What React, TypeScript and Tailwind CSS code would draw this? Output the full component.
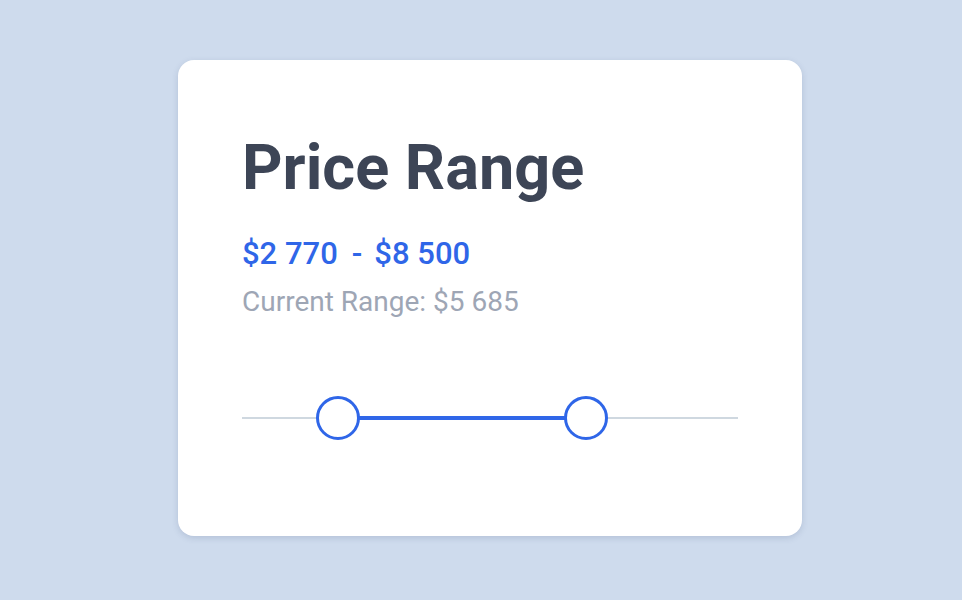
export default function App() {
  const min = 0;
  const max = 100;
  const low = 19.4;
  const high = 69.4;

  return (
    <div
      className="min-h-screen w-full bg-[#cedbed] pt-[60px] pl-[178px]"
      style={{ fontFamily: "Roboto, 'Noto Sans', sans-serif" }}
    >
      <div className="w-[624px] h-[476px] bg-white rounded-[16px] shadow-[0_2px_6px_rgba(60,80,120,0.18)] px-16 pt-[76px]">
        <h1 className="text-[63px] leading-none font-bold text-[#3d4556]">Price Range</h1>

        <div className="mt-[39px] text-[31px] leading-none font-medium text-[#2f66e8] whitespace-pre">
          $2 770<span className="ml-[14px] mr-[12px]">-</span>$8 500
        </div>
        <div className="mt-[19px] text-[28px] leading-none text-[#9ea6b5] whitespace-pre">
          Current Range: $5 685
        </div>

        {/* range slider */}
        <div className="relative mt-[80px] h-[44px]">
          <div className="absolute left-0 right-0 top-1/2 h-0.5 -translate-y-1/2 bg-[#cfd8e0]" />
          <div
            className="absolute top-1/2 h-1 -translate-y-1/2 bg-[#2f66e8]"
            style={{ left: `${((low - min) / (max - min)) * 100}%`, right: `${100 - ((high - min) / (max - min)) * 100}%` }}
          />
          {[low, high].map((v) => (
            <div
              key={v}
              className="absolute top-0 h-[44px] w-[44px] -translate-x-1/2 rounded-full border-[3px] border-[#2f66e8] bg-white"
              style={{ left: `${((v - min) / (max - min)) * 100}%` }}
            />
          ))}
        </div>
      </div>
    </div>
  );
}
